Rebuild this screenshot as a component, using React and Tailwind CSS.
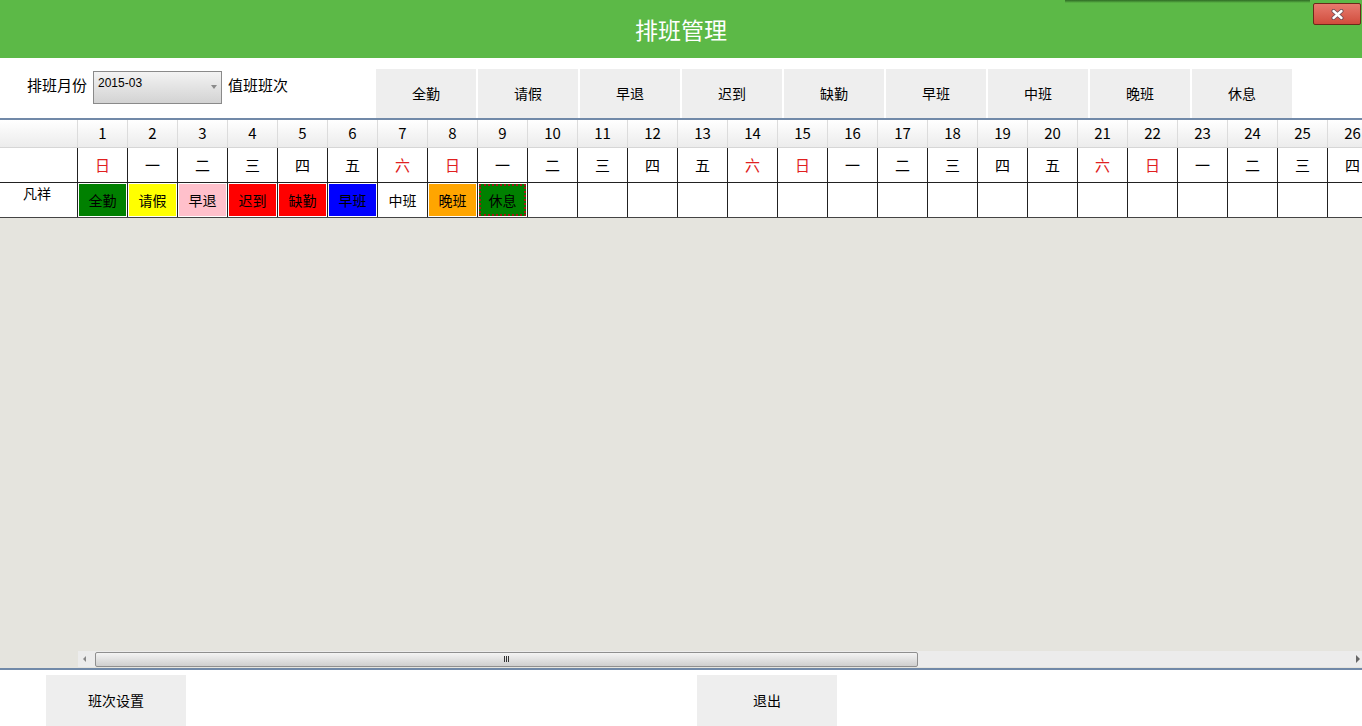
import React from "react";

const FONT = { fontFamily: '"Noto Sans CJK SC", "Noto Sans", sans-serif' };

const shiftButtons = ["全勤", "请假", "早退", "迟到", "缺勤", "早班", "中班", "晚班", "休息"];
const weekNames = ["日", "一", "二", "三", "四", "五", "六"];
const days = Array.from({ length: 27 }, (_, i) => i + 1);

const cellShifts = [
  { t: "全勤", c: "bg-[#008000]" },
  { t: "请假", c: "bg-[#ffff00]" },
  { t: "早退", c: "bg-[#ffc0cb]" },
  { t: "迟到", c: "bg-[#ff0000]" },
  { t: "缺勤", c: "bg-[#ff0000]" },
  { t: "早班", c: "bg-[#0000ff]" },
  { t: "中班", c: "bg-white" },
  { t: "晚班", c: "bg-[#ffa500]" },
  { t: "休息", c: "bg-[#008000]", focus: true },
];

export default function App() {
  return (
    <div className="w-[1362px] h-[726px] overflow-hidden flex flex-col bg-white text-black" style={FONT}>
      {/* Header */}
      <div className="relative h-[58px] bg-[#5cb947] flex items-center justify-center shrink-0">
        <div className="absolute left-[1065px] top-0 w-[245px] h-[3px] bg-gradient-to-b from-[#2f6b25] to-[#5cb947]" />
        <span className="text-white text-[23px] leading-none mt-[1px]">排班管理</span>
        <div className="absolute right-[1px] top-[3px] w-[48px] h-[22px] rounded-[2px] border border-[#6b2a1a] bg-gradient-to-b from-[#e77a6e] to-[#d04c3c] flex items-center justify-center">
          <svg width="13" height="11" viewBox="0 0 13 11">
            <path d="M2.5 2 L10.5 9 M10.5 2 L2.5 9" stroke="#6a4a55" strokeWidth="4" strokeLinecap="round" />
            <path d="M2.5 2 L10.5 9 M10.5 2 L2.5 9" stroke="#fff" strokeWidth="2.4" strokeLinecap="round" />
          </svg>
        </div>
      </div>

      {/* Toolbar */}
      <div className="h-[60px] flex shrink-0">
        <div className="flex items-start pt-[13px] pl-[27px] w-[376px] shrink-0">
          <span className="text-[15px] leading-[27px]">排班月份</span>
          <div className="ml-[6px] w-[129px] h-[33px] border border-[#8a8a8a] bg-gradient-to-b from-[#f3f3f3] to-[#d3d3d3] relative">
            <span className="absolute left-[4px] top-[3px] text-[12px] leading-[16px]" style={{ fontFamily: '"Liberation Sans", Arial, sans-serif' }}>2015-03</span>
            <span className="absolute right-[4px] top-[13px] w-0 h-0 border-l-[3px] border-r-[3px] border-t-[4px] border-l-transparent border-r-transparent border-t-[#8a8a8a]" />
          </div>
          <span className="ml-[6px] text-[15px] leading-[27px]">值班班次</span>
        </div>
        <div className="flex gap-[2px] pt-[11px]">
          {shiftButtons.map((b) => (
            <div key={b} className="w-[100px] h-[49px] bg-[#eeeeee] flex items-center justify-center text-[14px]">
              {b}
            </div>
          ))}
        </div>
      </div>

      <div className="h-[2px] bg-[#7189a8] shrink-0" />

      {/* Grid area */}
      <div className="flex-1 bg-[#e5e4de] flex flex-col overflow-hidden">
        <div className="flex-1 overflow-hidden">
          {/* Row 1: day numbers */}
          <div className="flex h-[28px] bg-gradient-to-b from-[#ffffff] to-[#ececec] border-b border-[#d6d6d6]">
            <div className="w-[78px] shrink-0 border-r border-[#dcdcdc]" />
            {days.map((d) => (
              <div key={d} className="w-[50px] shrink-0 border-r border-[#dcdcdc] flex items-center justify-center text-[15px]">
                {d}
              </div>
            ))}
          </div>
          {/* Row 2: weekdays */}
          <div className="flex h-[35px] bg-white border-b border-[#222]">
            <div className="w-[78px] shrink-0 border-r border-[#222]" />
            {days.map((d) => {
              const w = (d - 1) % 7;
              const red = w === 0 || w === 6;
              return (
                <div key={d} className={`w-[50px] shrink-0 border-r border-[#222] flex items-center justify-center text-[15px] ${red ? "text-[#e02020]" : ""}`}>
                  {weekNames[w]}
                </div>
              );
            })}
          </div>
          {/* Row 3: person */}
          <div className="flex h-[35px] bg-white border-b border-[#444]">
            <div className="w-[78px] shrink-0 border-r border-[#222] flex justify-center pr-[3px] text-[14px] leading-[20px]">凡祥</div>
            {days.map((d, i) => {
              const s = cellShifts[i];
              return (
                <div key={d} className="w-[50px] shrink-0 border-r border-[#222] p-[1px]">
                  {s && (
                    <div
                      className={`w-full h-full flex items-center justify-center text-[14px] ${s.c} ${s.focus ? "border-2 border-dotted border-[#a31515]" : ""}`}
                    >
                      {s.t}
                    </div>
                  )}
                </div>
              );
            })}
          </div>
        </div>
        {/* Scrollbar */}
        <div className="h-[16px] flex shrink-0">
          <div className="w-[78px] shrink-0" />
          <div className="flex-1 bg-[#ececec] flex items-center relative">
            <span className="ml-[5px] w-0 h-0 border-t-[3px] border-b-[3px] border-r-[3px] border-t-transparent border-b-transparent border-r-[#888]" />
            <div className="ml-[9px] w-[823px] h-[15px] border border-[#8f8f8f] rounded-[2px] bg-gradient-to-b from-[#f4f4f4] to-[#cfcfcf] flex items-center justify-center gap-[1px]">
              <span className="w-[1px] h-[6px] bg-[#333]" />
              <span className="w-[1px] h-[6px] bg-[#333]" />
              <span className="w-[1px] h-[6px] bg-[#333]" />
            </div>
            <span className="absolute right-[2px] w-0 h-0 border-t-[4px] border-b-[4px] border-l-[4px] border-t-transparent border-b-transparent border-l-[#666]" />
          </div>
        </div>
        <div className="h-[1px] shrink-0" />
      </div>

      <div className="h-[2px] bg-[#7189a8] shrink-0" />

      {/* Bottom */}
      <div className="h-[56px] shrink-0 flex pt-[5px]">
        <div className="ml-[46px] w-[140px] h-[51px] bg-[#eeeeee] flex items-center justify-center text-[14px]">班次设置</div>
        <div className="ml-[511px] w-[140px] h-[51px] bg-[#eeeeee] flex items-center justify-center text-[14px]">退出</div>
      </div>
    </div>
  );
}
